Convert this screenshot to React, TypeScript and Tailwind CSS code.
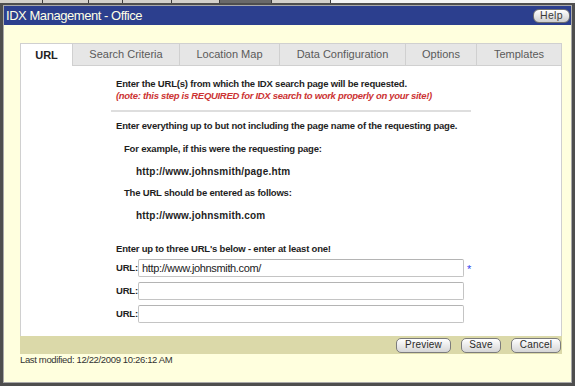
import React from 'react';

const tabs = [
  { label: 'URL', cls: 'w-[53px] bg-white text-[#222] font-bold border-l border-b-0' },
  { label: 'Search Criteria', cls: 'w-[107px] bg-[#e6e6e6] text-[#5a5a5a] border-b' },
  { label: 'Location Map', cls: 'w-[100px] bg-[#e6e6e6] text-[#5a5a5a] border-b' },
  { label: 'Data Configuration', cls: 'w-[126px] bg-[#e6e6e6] text-[#5a5a5a] border-b' },
  { label: 'Options', cls: 'w-[71px] bg-[#e6e6e6] text-[#5a5a5a] border-b' },
  { label: 'Templates', cls: 'w-[85px] bg-[#e6e6e6] text-[#5a5a5a] border-b' },
];

function Btn({ label, cls }: { label: string; cls: string }) {
  return (
    <div
      className={`h-[15px] rounded-[5px] border border-[#7c7c7c] bg-gradient-to-b from-white to-[#d6d6d6] flex items-center justify-center text-[10px] tracking-[0.2px] text-[#2a2a2a] leading-none ${cls}`}
    >
      {label}
    </div>
  );
}

function UrlRow({ value, star }: { value?: string; star?: boolean }) {
  return (
    <div className="flex items-center pl-[5px]">
      <div className="w-[22px] text-[9.5px] font-bold tracking-[-0.2px] text-[#222]">URL:</div>
      <div className="w-[326px] h-[18px] border border-[#c4c4c4] border-t-[#b4b4b4] rounded-[2px] bg-white flex items-center pl-[3px] text-[11px] tracking-[-0.35px] text-[#222]">
        {value}
      </div>
      {star && <div className="ml-[3px] text-[11px] text-[#3344ee] leading-none mt-[2px]">*</div>}
    </div>
  );
}

export default function App() {
  return (
    <div className="w-[575px] h-[386px] overflow-hidden bg-[#f2f2f2] font-['Liberation_Sans',Arial,sans-serif]">
      <div className="flex h-[3px] bg-[#d4d1cb]">
        <div className="w-[43px] border-r border-[#3c3c3c]" />
        <div className="w-[46px] border-r border-[#3c3c3c]" />
        <div className="w-[34px] border-r border-[#3c3c3c]" />
        <div className="w-[49px] border-r border-[#3c3c3c]" />
        <div className="w-[48px] border-r border-[#3c3c3c]" />
        <div className="w-[52px] border-r border-[#3c3c3c] bg-[#6a6a6a]" />
        <div className="w-[59px] border-r border-[#3c3c3c]" />
        <div className="flex-1 bg-[#f4f4f4]" />
      </div>
      <div className="h-[383px] border-[3px] border-t-2 border-[#4e4e4e]">
        <div className="h-full border border-[#a9a9a9] flex flex-col bg-[#ffffde]">
          <div className="h-[19px] shrink-0 bg-[#2c3f8e] flex items-center justify-between pl-[2px] pr-[1px]">
            <div className="text-[13px] tracking-[-0.45px] text-[#ffffe6] leading-none">IDX Management - Office</div>
            <div className="w-[37px] h-[14px] rounded-[6px] border border-[#6e6e6e] bg-gradient-to-b from-white to-[#cfcfcf] flex items-center justify-center text-[10.5px] text-[#3a3a3a] leading-none tracking-[0.3px]">
              Help
            </div>
          </div>
          <div className="ml-[16px] mt-[18px] w-[542px] flex flex-col">
            <div className="flex h-[23px]">
              {tabs.map((t) => (
                <div
                  key={t.label}
                  className={`h-full flex items-center justify-center border-t border-r border-[#d0d0d0] text-[11px] ${t.cls}`}
                >
                  {t.label}
                </div>
              ))}
            </div>
            <div className="h-[270px] bg-white border-l border-r border-[#d0d0d0]">
              <div className="w-[360px] mx-auto pt-[12px] text-[9.5px] tracking-[-0.2px] text-[#1e1e1e] font-bold leading-[12px]">
                <div className="pl-[5px]">Enter the URL(s) from which the IDX search page will be requested.</div>
                <div className="pl-[5px] italic text-[#cc3333] tracking-[-0.3px]">(note: this step is REQUIRED for IDX search to work properly on your site!)</div>
                <div className="mt-[8px] h-[2px] bg-[#dedede]" />
                <div className="pl-[5px] mt-[8px]">Enter everything up to but not including the page name of the requesting page.</div>
                <div className="pl-[13px] mt-[11px]">For example, if this were the requesting page:</div>
                <div className="pl-[25px] mt-[11px] text-[10px] tracking-[0.2px]">http://www.johnsmith/page.htm</div>
                <div className="pl-[13px] mt-[9px]">The URL should be entered as follows:</div>
                <div className="pl-[25px] mt-[11px] text-[10px] tracking-[0.2px]">http://www.johnsmith.com</div>
                <div className="pl-[5px] mt-[21px]">Enter up to three URL's below - enter at least one!</div>
                <div className="mt-[4px] flex flex-col gap-[5px] font-normal">
                  <UrlRow value="http://www.johnsmith.com/" star />
                  <UrlRow />
                  <UrlRow />
                </div>
              </div>
            </div>
            <div className="h-[18px] bg-[#dbd9a9] flex items-center justify-end gap-[10px] pr-[1px]">
              <Btn label="Preview" cls="w-[55px]" />
              <Btn label="Save" cls="w-[40px]" />
              <Btn label="Cancel" cls="w-[50px]" />
            </div>
            <div className="text-[9.5px] tracking-[-0.35px] leading-[12px] text-[#333]">Last modified: 12/22/2009 10:26:12 AM</div>
          </div>
        </div>
      </div>
    </div>
  );
}
